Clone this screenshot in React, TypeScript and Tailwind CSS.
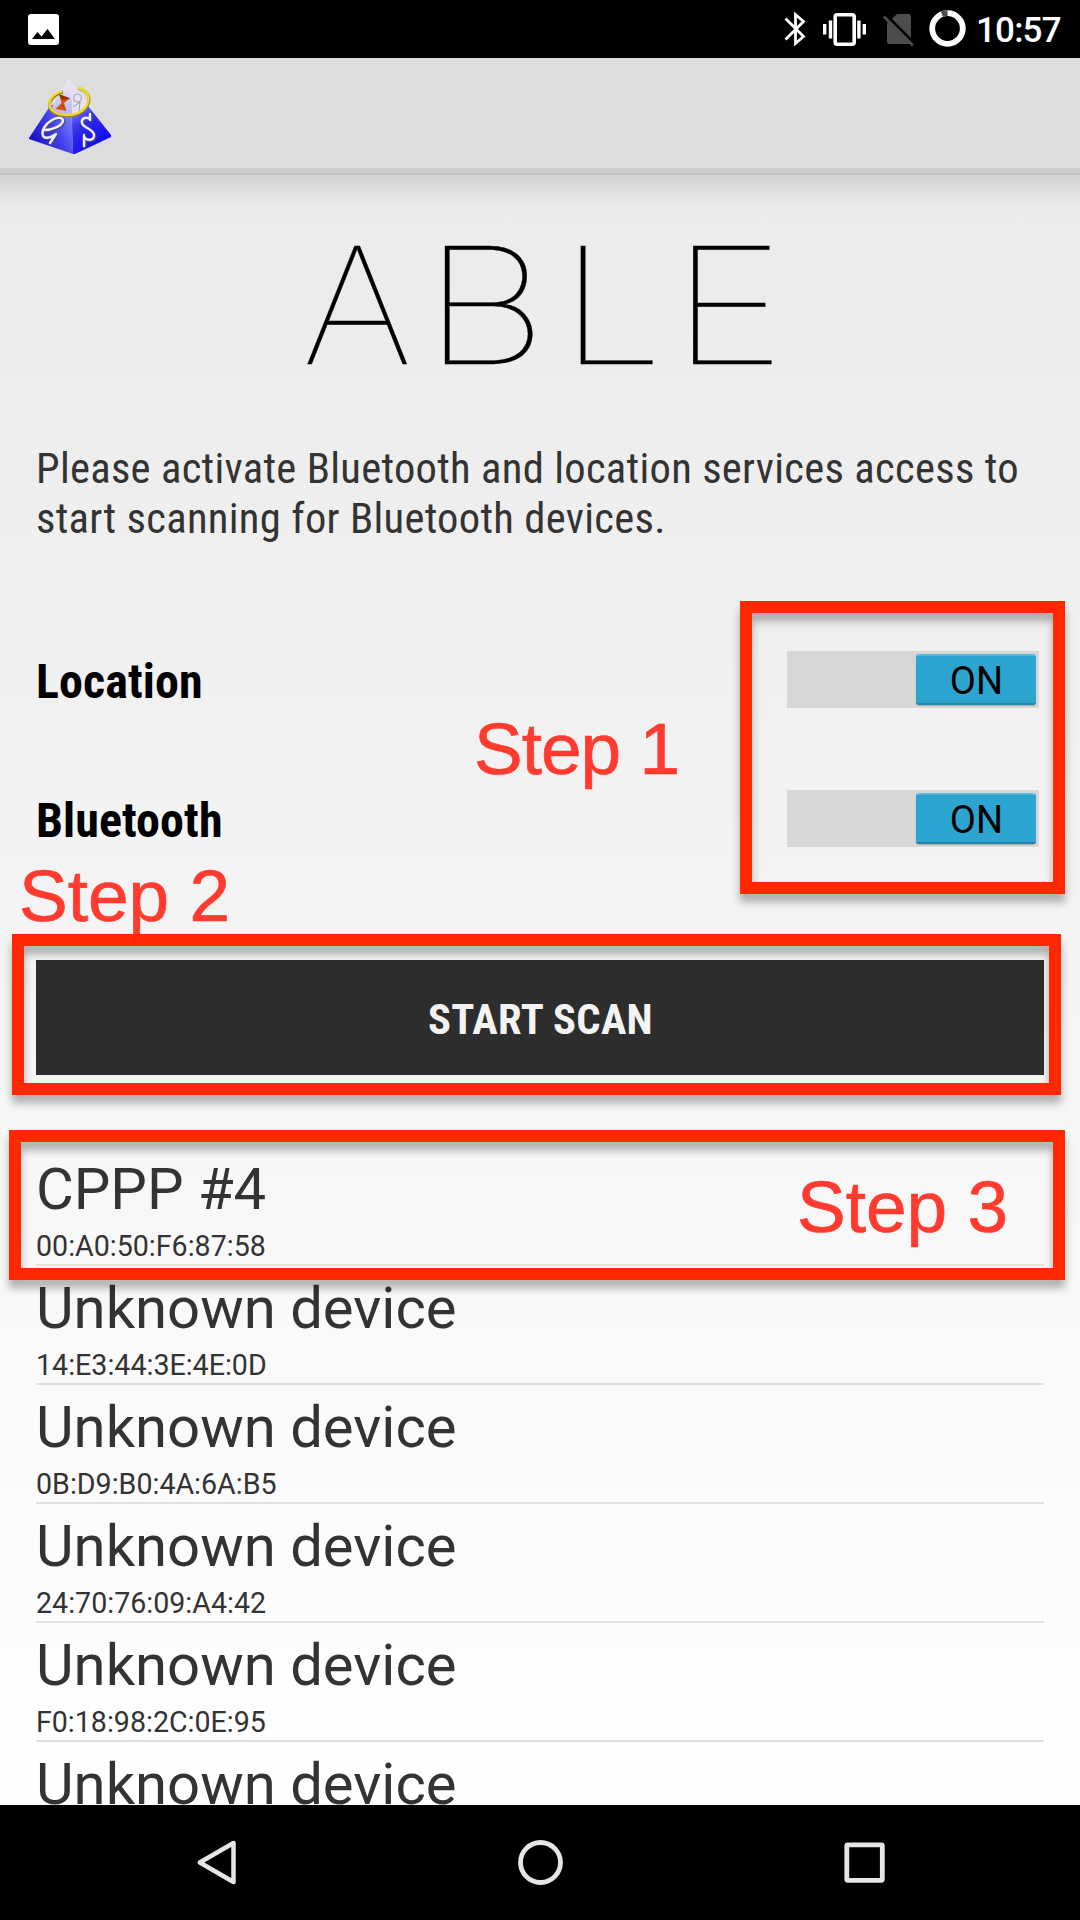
import React from "react";

const devices = [
  { name: "CPPP #4", mac: "00:A0:50:F6:87:58" },
  { name: "Unknown device", mac: "14:E3:44:3E:4E:0D" },
  { name: "Unknown device", mac: "0B:D9:B0:4A:6A:B5" },
  { name: "Unknown device", mac: "24:70:76:09:A4:42" },
  { name: "Unknown device", mac: "F0:18:98:2C:0E:95" },
  { name: "Unknown device", mac: "" },
];

function StatusBar() {
  return (
    <div className="flex h-[58px] items-center bg-black pl-[28px] pr-[19px] text-white">
      <svg width="31" height="31" viewBox="0 0 31 31">
        <rect width="31" height="31" rx="3" fill="#fff" />
        <path d="M4 25 9.500 18 13.500 22.500 19.500 15 27 25Z" fill="#000" />
      </svg>
      <div className="ml-auto flex h-full items-center">
        <svg width="193" height="58" viewBox="780 0 193 58" fill="none">
          <g stroke="#fff" strokeWidth="2.8">
            <path d="M785.500 18.500 803.500 36.500 795.500 43.500V14.500L803.500 21.500 785.500 39.500" />
          </g>
          <rect x="835.200" y="14.700" width="19" height="29.600" rx="2" stroke="#fff" strokeWidth="3.600" />
          <path d="M830.500 20.500V38.500M824.700 24V34.500M858.900 20.500V38.500M864.300 24V34.500" stroke="#fff" strokeWidth="3.400" />
          <path d="M897 14H908.500Q911 14 911 16.500V41.500Q911 44 908.500 44H889.500Q887 44 887 41.500V23.500Z" fill="#4d4d4d" />
          <path d="M885.500 14.500 914.500 43.500" stroke="#000" strokeWidth="3" />
          <path d="M883.800 16.500 912.800 45.500" stroke="#4d4d4d" strokeWidth="2.800" />
          <circle cx="947.500" cy="28.500" r="15.300" stroke="#fff" strokeWidth="5.800" />
          <path d="M941.900 14.300A15.300 15.300 0 0 1 947.500 13.200" stroke="#4d4d4d" strokeWidth="5.800" />
        </svg>
        <span className="ml-[3px] w-[85px] whitespace-nowrap pt-[3px] text-[35px] font-medium leading-[56px] tracking-[-0.8px]">10:57</span>
      </div>
    </div>
  );
}

function Logo() {
  return (
    <svg width="84" height="78" viewBox="0 0 84 78">
      <defs>
        <linearGradient id="left" x1="0" y1="0.900" x2="1" y2="0.200">
          <stop offset="0" stopColor="#0d06b4" />
          <stop offset="0.550" stopColor="#4340ec" />
          <stop offset="1" stopColor="#8f90ff" />
        </linearGradient>
        <linearGradient id="right" x1="0.100" y1="0" x2="0.700" y2="1">
          <stop offset="0" stopColor="#9a97f8" />
          <stop offset="0.450" stopColor="#2f2bee" />
          <stop offset="1" stopColor="#0a00f5" />
        </linearGradient>
        <linearGradient id="tip" x1="0" y1="0" x2="0" y2="1">
          <stop offset="0" stopColor="#f3effa" />
          <stop offset="1" stopColor="#b9b3f2" />
        </linearGradient>
      </defs>
      <path d="M22 28 1 60V61L45 76 43 20Z" fill="url(#left)" />
      <path d="M43 20 60 28 83 57V59L47 76H45Z" fill="url(#right)" />
      <path d="M41 1 23 31Q31 39 44 38Z" fill="url(#tip)" />
      <path d="M42 2 61 26Q55 38 44 38Z" fill="#e6e2f0" />
      <g stroke="#8c88ac" strokeWidth="0.800" fill="none">
        <circle cx="49.500" cy="20" r="4" />
        <path d="M45 29 52 24 51 33" />
      </g>
      <path d="M46 47 54 44 53 52 46 55ZM67 40 72 45 68 49M59 36 64 34" stroke="#3f3aa8" strokeWidth="0.800" fill="none" />
      <path d="M31 16 42 20.500 36 25 38.500 33 27.500 31 33.500 25Z" fill="#d9520f" />
      <path d="M31 16 42 20.500 34 22ZM34 25 38.500 33 35 28Z" fill="#8f300b" />
      <path d="M35 14C25 17 20 24 22 29C25 40 48 41 57 31C65 21 60 12 50 10.500" stroke="#9c8420" strokeWidth="3" fill="none" />
      <path d="M34 13.500C24 16 20 23 22 28.500C25 39 48 40 57 30C64 20 60 12 50 10" stroke="#f2da2a" strokeWidth="2.300" fill="none" />
      <g fill="none" strokeLinecap="round" strokeLinejoin="round">
        <path d="M17 53C25 53 35 49 36 44C36 40 30 40 25 43C18 47 14 54 16 59C18 62 24 61 29 57L23 66" stroke="#4a4788" strokeWidth="3" />
        <path d="M16 52C24 52 34 48 35 43C35 39 29 39 24 42C17 46 13 53 15 58C17 61 23 60 28 56L22 65" stroke="#f1f0ff" strokeWidth="2.400" />
        <path d="M63 37V43M63 42C58 39 54 42 55 46C56 51 67 52 67 58C67 64 60 64 57 60M57 58V69" stroke="#4a4788" strokeWidth="3" />
        <path d="M62 36V42M62 41C57 38 53 41 54 45C55 50 66 51 66 57C66 63 59 63 56 59M56 57V68" stroke="#f1f0ff" strokeWidth="2.400" />
      </g>
    </svg>
  );
}

function Toggle() {
  return (
    <div className="mt-[-1px] flex h-[57px] w-[252px] justify-end bg-[#d7d7d7] pr-[3px] pt-[3px]">
      <div className="h-[51px] w-[120px] rounded-[3px] border-b-2 border-t-2 border-b-[#2286ab] border-t-[#56b9dc] bg-[#2ca5d1] pl-px text-center text-[38px] leading-[50px] text-black shadow-[0_1px_1px_rgba(0,0,0,0.2)]">
        ON
      </div>
    </div>
  );
}

function ToggleRow({ label }: { label: string }) {
  return (
    <div className="flex h-[139px] items-center justify-between pl-[36px] pr-[41px]">
      <span className="pt-[4px] text-[48px] font-bold leading-[56px] tracking-[0.100px] text-black [font-stretch:75%]">{label}</span>
      <Toggle />
    </div>
  );
}

function NavBar() {
  return (
    <div className="grid h-[115px] grid-cols-[54px_324px_324px_324px_54px] bg-black">
      <span />
      <svg width="324" height="115" viewBox="54 1805 324 115" fill="none">
        <path d="M233.500 1843V1882L199.800 1862.500Z" stroke="#e6e6e6" strokeWidth="4.500" strokeLinejoin="round" />
      </svg>
      <svg width="324" height="115" viewBox="378 1805 324 115" fill="none">
        <circle cx="540.500" cy="1862.500" r="20" stroke="#e6e6e6" strokeWidth="4.800" />
      </svg>
      <svg width="324" height="115" viewBox="702 1805 324 115" fill="none">
        <rect x="846.800" y="1844.800" width="35.500" height="35.500" rx="1" stroke="#e6e6e6" strokeWidth="4.800" />
      </svg>
    </div>
  );
}

const frame = "absolute border-[12px] border-[#ff2800] drop-shadow-[0_8px_4px_rgba(0,0,0,0.3)]";
const step =
  "absolute whitespace-nowrap font-['Liberation_Sans',sans-serif] text-[73px] leading-[80px] text-[#ff3b30] [-webkit-text-stroke:0.7px_#ff3b30]";

export default function App() {
  return (
    <div className="relative flex h-[1920px] w-[1080px] flex-col overflow-hidden bg-black font-['Roboto',sans-serif]">
      <StatusBar />
      <main className="h-[1747px] overflow-hidden bg-linear-to-b from-[#e9e9e9] to-white">
        <header className="h-[117px] border-b-2 border-[#c0c0c0] bg-[#dddddd]">
          <div className="flex h-[115px] border-b-[5px] border-[#cbcbcb] pl-[28px] pt-[20px]">
            <Logo />
          </div>
        </header>
        <div className="bg-[linear-gradient(to_bottom,rgba(0,0,0,0.11),transparent_30px)]">
          <h1 className="flex h-[266px] pl-[302.3px] font-['Inter',sans-serif] text-[162px] font-thin leading-[261px] text-black [-webkit-text-stroke:0.3px_#000]">
            <span className="w-[120.4px] origin-left scale-x-[1.065]">A</span>
            <span className="w-[137px] origin-left scale-x-[1.2]">B</span>
            <span className="w-[111.6px] origin-left scale-x-[1.14]">L</span>
            <span className="w-[112px] origin-left scale-x-[1.21]">E</span>
          </h1>
        </div>
        <p className="h-[169px] whitespace-nowrap pl-[36px] pt-[2px] text-[42.6px] leading-[50px] tracking-[0.290px] text-[#333333] [font-stretch:75%]">
          Please activate Bluetooth and location services access to
          <br />
          start scanning for Bluetooth devices.
        </p>
        <ToggleRow label="Location" />
        <ToggleRow label="Bluetooth" />
        <button className="mx-[36px] mt-[72px] block h-[115px] w-[1008px] bg-[#2d2d2d] pb-px pl-px pt-[3px] text-[42.6px] font-bold leading-[50px] tracking-[0.300px] text-[#f3f3f3] [font-stretch:75%]">
          START SCAN
        </button>
        <ul className="mx-[36px] mt-[72px] text-[#333333]">
          {devices.map((d, i) => (
            <li key={i} className="h-[119px] border-b-2 border-[#e1e1e1] pt-[8px]">
              <div className="mb-[6px] text-[58px] leading-[68px]">{d.name}</div>
              <div className="text-[28.6px] leading-[35px]">{d.mac}</div>
            </li>
          ))}
        </ul>
      </main>
      <NavBar />

      <span className={`${step} left-[474px] top-[709px] tracking-[-1px]`}>Step 1</span>
      <span className={`${step} left-[19px] top-[856px]`}>Step 2</span>
      <span className={`${step} left-[797px] top-[1167px]`}>Step 3</span>
      <div className={`${frame} left-[740px] top-[601px] h-[293px] w-[325px]`} />
      <div className={`${frame} left-[12px] top-[934px] h-[161px] w-[1049px]`} />
      <div className={`${frame} left-[9px] top-[1130px] h-[150px] w-[1056px]`} />
    </div>
  );
}
